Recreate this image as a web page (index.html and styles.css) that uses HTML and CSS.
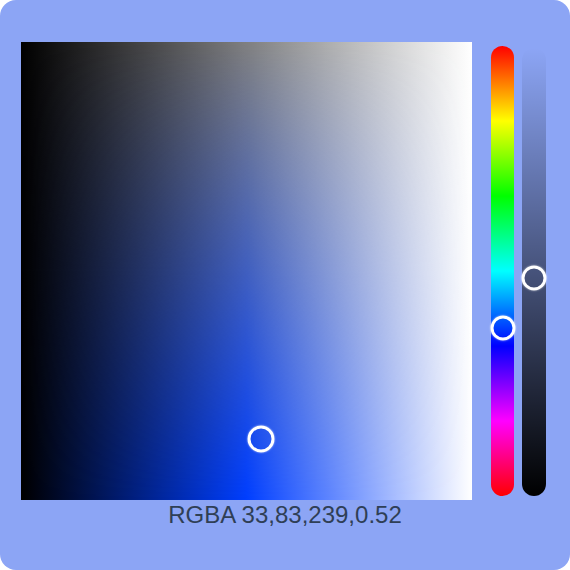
FILE: index.html
```html
<!DOCTYPE html>
<html>
<head>
<meta charset="utf-8">
<link rel="stylesheet" href="styles.css">
</head>
<body>
<div class="picker">
  <div class="row">
    <div class="plane">
      <div class="plane-gray"></div>
      <div class="handle handle-plane" style="left:53.2%; top:86.6%"></div>
    </div>
    <div class="slider hue">
      <div class="handle handle-slider" style="top:62.6%"></div>
    </div>
    <div class="slider alpha">
      <div class="handle handle-slider" style="top:51.4%"></div>
    </div>
  </div>
  <div class="label">RGBA 33,83,239,0.52</div>
</div>
</body>
</html>
```

FILE: styles.css
```css
html, body {
  margin: 0;
  padding: 0;
  background: #ffffff;
}

.picker {
  width: 570px;
  height: 570px;
  box-sizing: border-box;
  padding: 42px 24px 0 21px;
  border-radius: 16px;
  background: #8ca5f5;
  font-family: "Liberation Sans", Arial, sans-serif;
}

.row {
  display: flex;
  align-items: flex-start;
}

.plane {
  position: relative;
  width: 451px;
  height: 458px;
  background: linear-gradient(to right, #000000, hsl(225.4, 100%, 50%), #ffffff);
}

.plane-gray {
  position: absolute;
  inset: 0;
  background: linear-gradient(to right, #000000, #ffffff);
  -webkit-mask-image: linear-gradient(to bottom, #000 0%, transparent 100%);
  mask-image: linear-gradient(to bottom, #000 0%, transparent 100%);
}

.slider {
  position: relative;
}

.hue {
  margin-left: 19px;
  margin-top: 4px;
  width: 23px;
  height: 450px;
  border-radius: 12px;
  background: linear-gradient(to bottom, #ff0000 0%, #ffff00 16.67%, #00ff00 33.33%, #00ffff 50%, #0000ff 66.67%, #ff00ff 83.33%, #ff0000 100%);
}

.alpha {
  margin-left: 8px;
  margin-top: 6px;
  width: 24px;
  height: 448px;
  border-radius: 12px;
  background: linear-gradient(to bottom, rgba(0, 0, 0, 0), rgba(0, 0, 0, 1));
}

.handle {
  position: absolute;
  box-sizing: border-box;
  border: 3px solid #ffffff;
  border-radius: 50%;
  transform: translate(-50%, -50%);
  box-shadow: 0 0 2px rgba(255, 255, 255, 0.7);
}

.handle-plane {
  width: 27px;
  height: 27px;
}

.handle-slider {
  left: 50%;
  width: 25px;
  height: 25px;
}

.label {
  text-align: center;
  font-size: 24px;
  line-height: 28px;
  color: #2f3f56;
  margin-left: -21px;
  margin-right: -24px;
  margin-top: 1px;
}
```
